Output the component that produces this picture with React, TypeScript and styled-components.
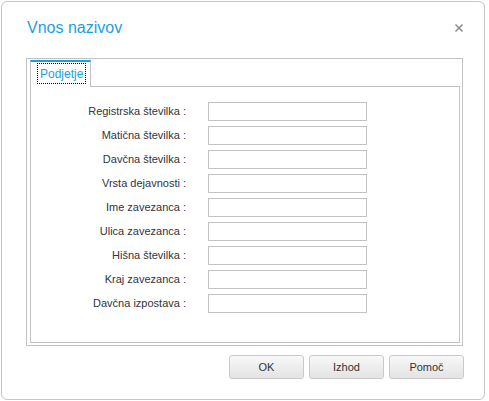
import { Fragment } from 'react'
import styled, { createGlobalStyle } from 'styled-components'

const GlobalStyle = createGlobalStyle`
  html, body {
    margin: 0;
    padding: 0;
    background: #ffffff;
  }
  body {
    font-family: "Liberation Sans", Arial, sans-serif;
  }
`

const Dialog = styled.div`
  box-sizing: border-box;
  margin: 1px 0 0 1px;
  width: 484px;
  height: 399px;
  border: 1px solid #c6c6c6;
  border-radius: 6px;
  background: #fff;
  padding: 0 21px 0 24px;
  display: flex;
  flex-direction: column;
`

const Header = styled.div`
  display: flex;
  align-items: center;
  justify-content: space-between;
  height: 20px;
  margin: 16px -1px 20px 1px;
`

const Title = styled.h1`
  margin: 0;
  font-size: 16px;
  font-weight: normal;
  line-height: 20px;
  color: #1ba1e2;
`

const Close = styled.button`
  border: 0;
  background: none;
  padding: 0;
  width: 10px;
  height: 10px;
  display: flex;
  cursor: pointer;
`

const TabBox = styled.div`
  box-sizing: border-box;
  height: 288px;
  border: 1px solid #c3c3c3;
  padding: 1px 2px 2px 3px;
  display: flex;
  flex-direction: column;
`

const TabStrip = styled.div`
  display: flex;
  height: 26px;
`

const Tab = styled.div`
  box-sizing: border-box;
  width: 61px;
  height: 27px;
  border-top: 2px solid #1ba1e2;
  border-left: 1px solid #c3c3c3;
  border-right: 1px solid #c3c3c3;
  background: #fff;
  position: relative;
  z-index: 1;
  padding: 2px 0 0 7px;
`

const TabLabel = styled.span`
  display: inline-block;
  outline: 1px dotted #000;
  padding: 2px 2px 0 2px;
  height: 17px;
  font-size: 12px;
  line-height: 17px;
  color: #1ba1e2;
`

const Panel = styled.div`
  flex: 1;
  border: 1px solid #c3c3c3;
  padding: 15px 0 0 0;
  display: grid;
  grid-template-columns: 155px 159px;
  grid-auto-rows: 19px;
  column-gap: 22px;
  row-gap: 5px;
  align-content: start;
`

const Label = styled.label`
  font-size: 11px;
  color: #33333d;
  text-align: right;
  line-height: 19px;
`

const Input = styled.input`
  box-sizing: border-box;
  width: 159px;
  height: 19px;
  border: 1px solid #c3c3c3;
  margin: 0;
  padding: 0 3px;
  font: 11px "Liberation Sans", Arial, sans-serif;
  outline: none;
`

const Buttons = styled.div`
  display: flex;
  justify-content: flex-end;
  gap: 5px;
  margin-top: 9px;
  margin-right: -1px;
`

const Button = styled.button`
  box-sizing: border-box;
  width: 75px;
  height: 24px;
  border: 1px solid #c9c9c9;
  border-radius: 3px;
  background: linear-gradient(#f8f8f8, #e3e3e3);
  font: 11px "Liberation Sans", Arial, sans-serif;
  color: #333;
  padding: 0;
  cursor: pointer;
`

const fields = [
  'Registrska številka :',
  'Matična številka :',
  'Davčna številka :',
  'Vrsta dejavnosti :',
  'Ime zavezanca :',
  'Ulica zavezanca :',
  'Hišna številka :',
  'Kraj zavezanca :',
  'Davčna izpostava :',
]

export default function App() {
  return (
    <>
      <GlobalStyle />
      <Dialog>
        <Header>
          <Title>Vnos nazivov</Title>
          <Close aria-label="Zapri">
            <svg width="10" height="10" viewBox="0 0 10 10">
              <path d="M1.5 1.5 L8.5 8.5 M8.5 1.5 L1.5 8.5" stroke="#8c8c8c" strokeWidth="1.5" />
            </svg>
          </Close>
        </Header>
        <TabBox>
          <TabStrip>
            <Tab>
              <TabLabel>Podjetje</TabLabel>
            </Tab>
          </TabStrip>
          <Panel>
            {fields.map((f) => (
              <Fragment key={f}>
                <Label>{f}</Label>
                <Input />
              </Fragment>
            ))}
          </Panel>
        </TabBox>
        <Buttons>
          <Button>OK</Button>
          <Button>Izhod</Button>
          <Button>Pomoč</Button>
        </Buttons>
      </Dialog>
    </>
  )
}
